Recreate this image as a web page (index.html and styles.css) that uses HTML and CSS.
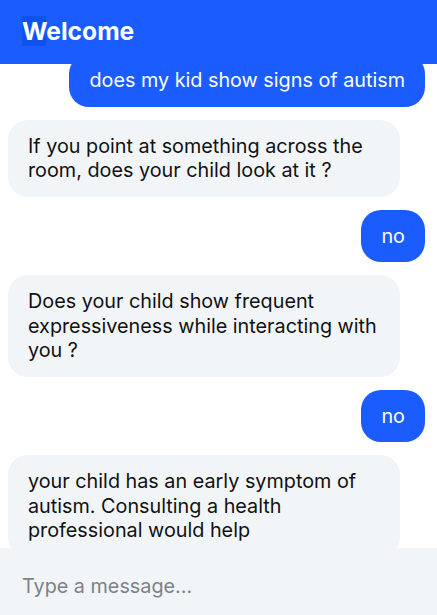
FILE: index.html
```html
<!DOCTYPE html>
<html lang="en">
<head>
<meta charset="utf-8">
<title>Welcome</title>
<link rel="stylesheet" href="styles.css">
</head>
<body>
<div class="app">
  <header class="header"><h1 class="title"><span class="sel">W</span>elcome</h1></header>
  <main class="messages">
    <div class="list">
      <div class="msg user">does my kid show signs of autism</div>
      <div class="msg bot">If you point at something across the room, does your child look at it ?</div>
      <div class="msg user">no</div>
      <div class="msg bot">Does your child show frequent expressiveness while interacting with you ?</div>
      <div class="msg user">no</div>
      <div class="msg bot">your child has an early symptom of autism. Consulting a health professional would help</div>
    </div>
  </main>
  <footer class="composer"><input class="input" type="text" placeholder="Type a message..."></footer>
</div>
</body>
</html>
```
FILE: styles.css
```css
* { box-sizing: border-box; }
html, body { margin: 0; height: 100%; }
body { font-family: Inter, "Noto Sans", sans-serif; background: #fff; color: #111; }
.app { display: flex; flex-direction: column; height: 615px; overflow: hidden; }
.header { height: 64px; flex: none; background: #1a5cff; display: flex; align-items: center; padding: 0 22px 2px; position: relative; z-index: 1; }
.title { margin: 0; font-size: 24.6px; font-weight: 700; color: #fff; line-height: 26px; }
.sel { background: #0f52ec; }
.messages { flex: 1; overflow: hidden; }
.list { display: flex; flex-direction: column; gap: 13px; margin-top: -10px; padding: 0 12px 0 8px; }
.msg { font-size: 19.8px; line-height: 24.5px; padding: 14px 20px; border-radius: 20px; max-width: 392px; }
.user { align-self: flex-end; background: #1a5cff; color: #fff; }
.bot { align-self: flex-start; background: #f2f5f8; color: #111; width: 392px; }
.composer { height: 67px; flex: none; background: #f2f5f8; display: flex; align-items: center; padding: 8px 22px 0; }
.input { border: none; background: transparent; outline: none; font-family: Inter, "Noto Sans", sans-serif; font-size: 19.8px; color: #111; width: 100%; padding: 0; }
.input::placeholder { color: #7c8189; }
```
